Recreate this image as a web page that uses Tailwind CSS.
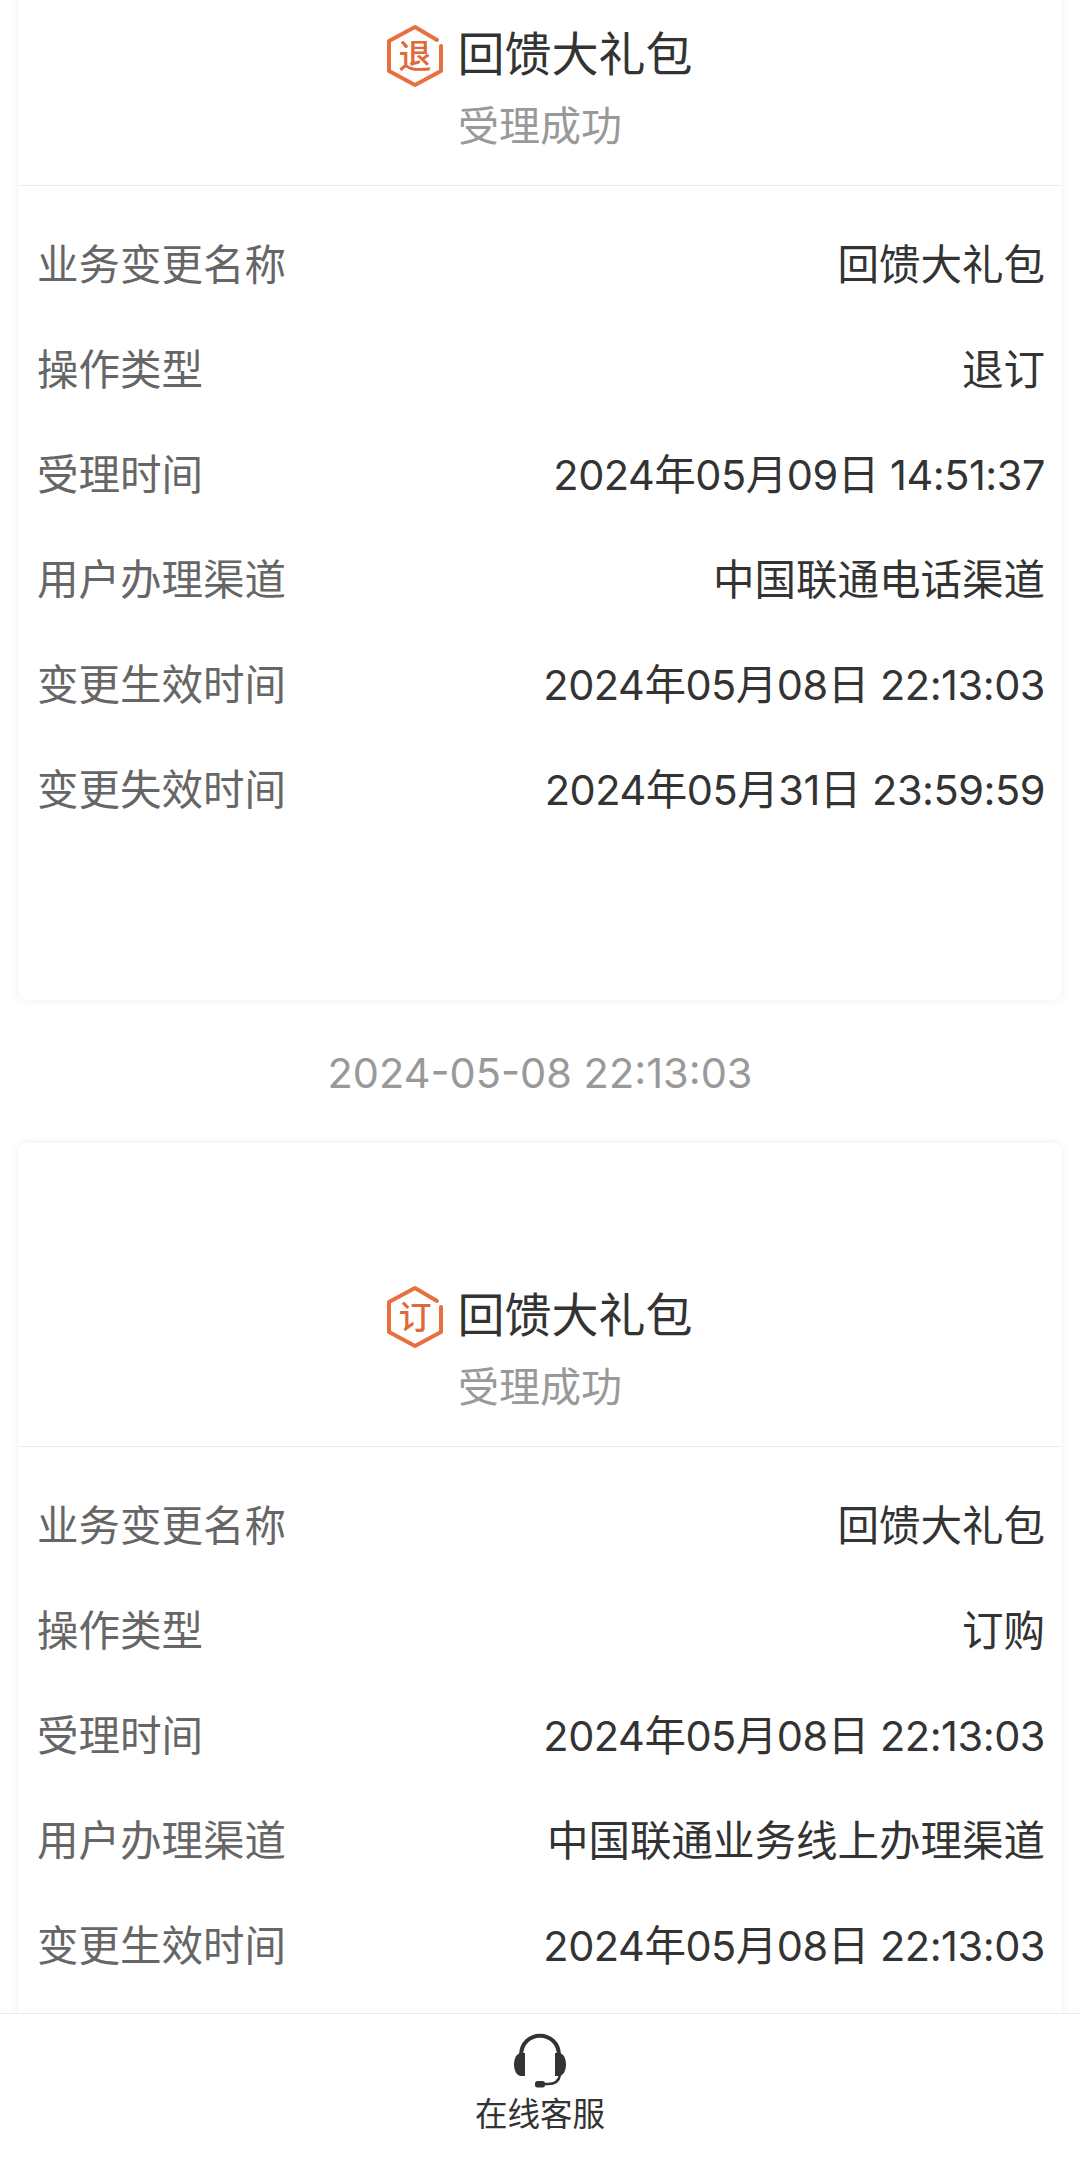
<!DOCTYPE html>
<html lang="zh-CN">
<head>
<meta charset="utf-8">
<script src="https://cdn.jsdelivr.net/npm/@tailwindcss/browser@4"></script>
</head>
<body class="bg-white">
<div class="relative w-[1080px] h-[2169px] overflow-hidden bg-white font-['Inter','Noto_Sans_CJK_SC',sans-serif]">
  <div class="-mt-[117px] px-[18px]">
    <!-- card 1 -->
    <section class="h-[1117px] rounded-[9px] bg-white shadow-[0_0_10px_rgba(0,0,0,0.07)]">
      <div class="h-[303px] border-b border-[#ececec] flex flex-col items-center pt-[139px]">
        <div class="flex items-center h-[64px] gap-[13px] -ml-[3px]">
          <svg class="w-[60px] h-[64px] mt-[4px]" viewBox="0 0 60 64"><path d="M52 16 L30 3 L4 17 V47 L30 61 L56 47 V22" fill="none" stroke="#e8703f" stroke-width="4" stroke-linejoin="round" stroke-linecap="round"/><text x="30" y="44" text-anchor="middle" font-size="33" font-weight="500" fill="#e0693a" font-family="Noto Sans CJK SC,serif">退</text></svg>
          <span class="text-[47px] leading-[64px] text-[#333]">回馈大礼包</span>
        </div>
        <div class="mt-[12px] text-[41px] leading-[56px] text-[#999]">受理成功</div>
      </div>
      <dl class="pl-[19px] pr-[17px] pt-[27px] text-[41.5px] leading-[105px]">
        <div class="flex justify-between h-[105px]"><dt class="text-[#666]">业务变更名称</dt><dd class="text-[#333]">回馈大礼包</dd></div>
        <div class="flex justify-between h-[105px]"><dt class="text-[#666]">操作类型</dt><dd class="text-[#333]">退订</dd></div>
        <div class="flex justify-between h-[105px]"><dt class="text-[#666]">受理时间</dt><dd class="text-[#333] tracking-[-0.48px]">2024年05月09日 14:51:37</dd></div>
        <div class="flex justify-between h-[105px]"><dt class="text-[#666]">用户办理渠道</dt><dd class="text-[#333]">中国联通电话渠道</dd></div>
        <div class="flex justify-between h-[105px]"><dt class="text-[#666]">变更生效时间</dt><dd class="text-[#333] tracking-[-0.48px]">2024年05月08日 22:13:03</dd></div>
        <div class="flex justify-between h-[105px]"><dt class="text-[#666]">变更失效时间</dt><dd class="text-[#333] tracking-[-0.48px]">2024年05月31日 23:59:59</dd></div>
      </dl>
    </section>
    <div class="h-[143px] pt-[3px] flex items-center justify-center text-[41.5px] text-[#999]">2024-05-08 22:13:03</div>
    <!-- card 2 -->
    <section class="h-[1117px] rounded-[9px] bg-white shadow-[0_0_10px_rgba(0,0,0,0.07)]">
      <div class="h-[304px] border-b border-[#ececec] flex flex-col items-center pt-[140px]">
        <div class="flex items-center h-[64px] gap-[13px] -ml-[3px]">
          <svg class="w-[60px] h-[64px] mt-[4px]" viewBox="0 0 60 64"><path d="M52 16 L30 3 L4 17 V47 L30 61 L56 47 V22" fill="none" stroke="#e8703f" stroke-width="4" stroke-linejoin="round" stroke-linecap="round"/><text x="30" y="44" text-anchor="middle" font-size="33" font-weight="500" fill="#e0693a" font-family="Noto Sans CJK SC,serif">订</text></svg>
          <span class="text-[47px] leading-[64px] text-[#333]">回馈大礼包</span>
        </div>
        <div class="mt-[12px] text-[41px] leading-[56px] text-[#999]">受理成功</div>
      </div>
      <dl class="pl-[19px] pr-[17px] pt-[27px] text-[41.5px] leading-[105px]">
        <div class="flex justify-between h-[105px]"><dt class="text-[#666]">业务变更名称</dt><dd class="text-[#333]">回馈大礼包</dd></div>
        <div class="flex justify-between h-[105px]"><dt class="text-[#666]">操作类型</dt><dd class="text-[#333]">订购</dd></div>
        <div class="flex justify-between h-[105px]"><dt class="text-[#666]">受理时间</dt><dd class="text-[#333] tracking-[-0.48px]">2024年05月08日 22:13:03</dd></div>
        <div class="flex justify-between h-[105px]"><dt class="text-[#666]">用户办理渠道</dt><dd class="text-[#333]">中国联通业务线上办理渠道</dd></div>
        <div class="flex justify-between h-[105px]"><dt class="text-[#666]">变更生效时间</dt><dd class="text-[#333] tracking-[-0.48px]">2024年05月08日 22:13:03</dd></div>
      </dl>
    </section>
  </div>
  <!-- fixed footer -->
  <footer class="absolute left-0 right-0 bottom-0 h-[156px] bg-white border-t border-[#ececec] flex flex-col items-center">
    <svg class="mt-[18px] w-[56px] h-[56px]" viewBox="0 0 56 56">
      <path d="M9 26 V24 C9 -3 47 -3 47 24 V26" fill="none" stroke="#333" stroke-width="4"/>
      <path d="M13 21 V44 H9 C5 44 2 39 2 32.500 C2 26 5 21 9 21 Z" fill="#333"/>
      <path d="M43 21 V44 H47 C51 44 54 39 54 32.500 C54 26 51 21 47 21 Z" fill="#333"/>
      <path d="M48 43 C47 49 43 52 36 52 H30" fill="none" stroke="#333" stroke-width="2.500"/>
      <rect x="23" y="49" width="10" height="6.500" rx="2.500" fill="#333"/>
    </svg>
    <span class="mt-[5px] text-[32.5px] leading-[44px] text-[#333]">在线客服</span>
  </footer>
</div>
</body>
</html>
